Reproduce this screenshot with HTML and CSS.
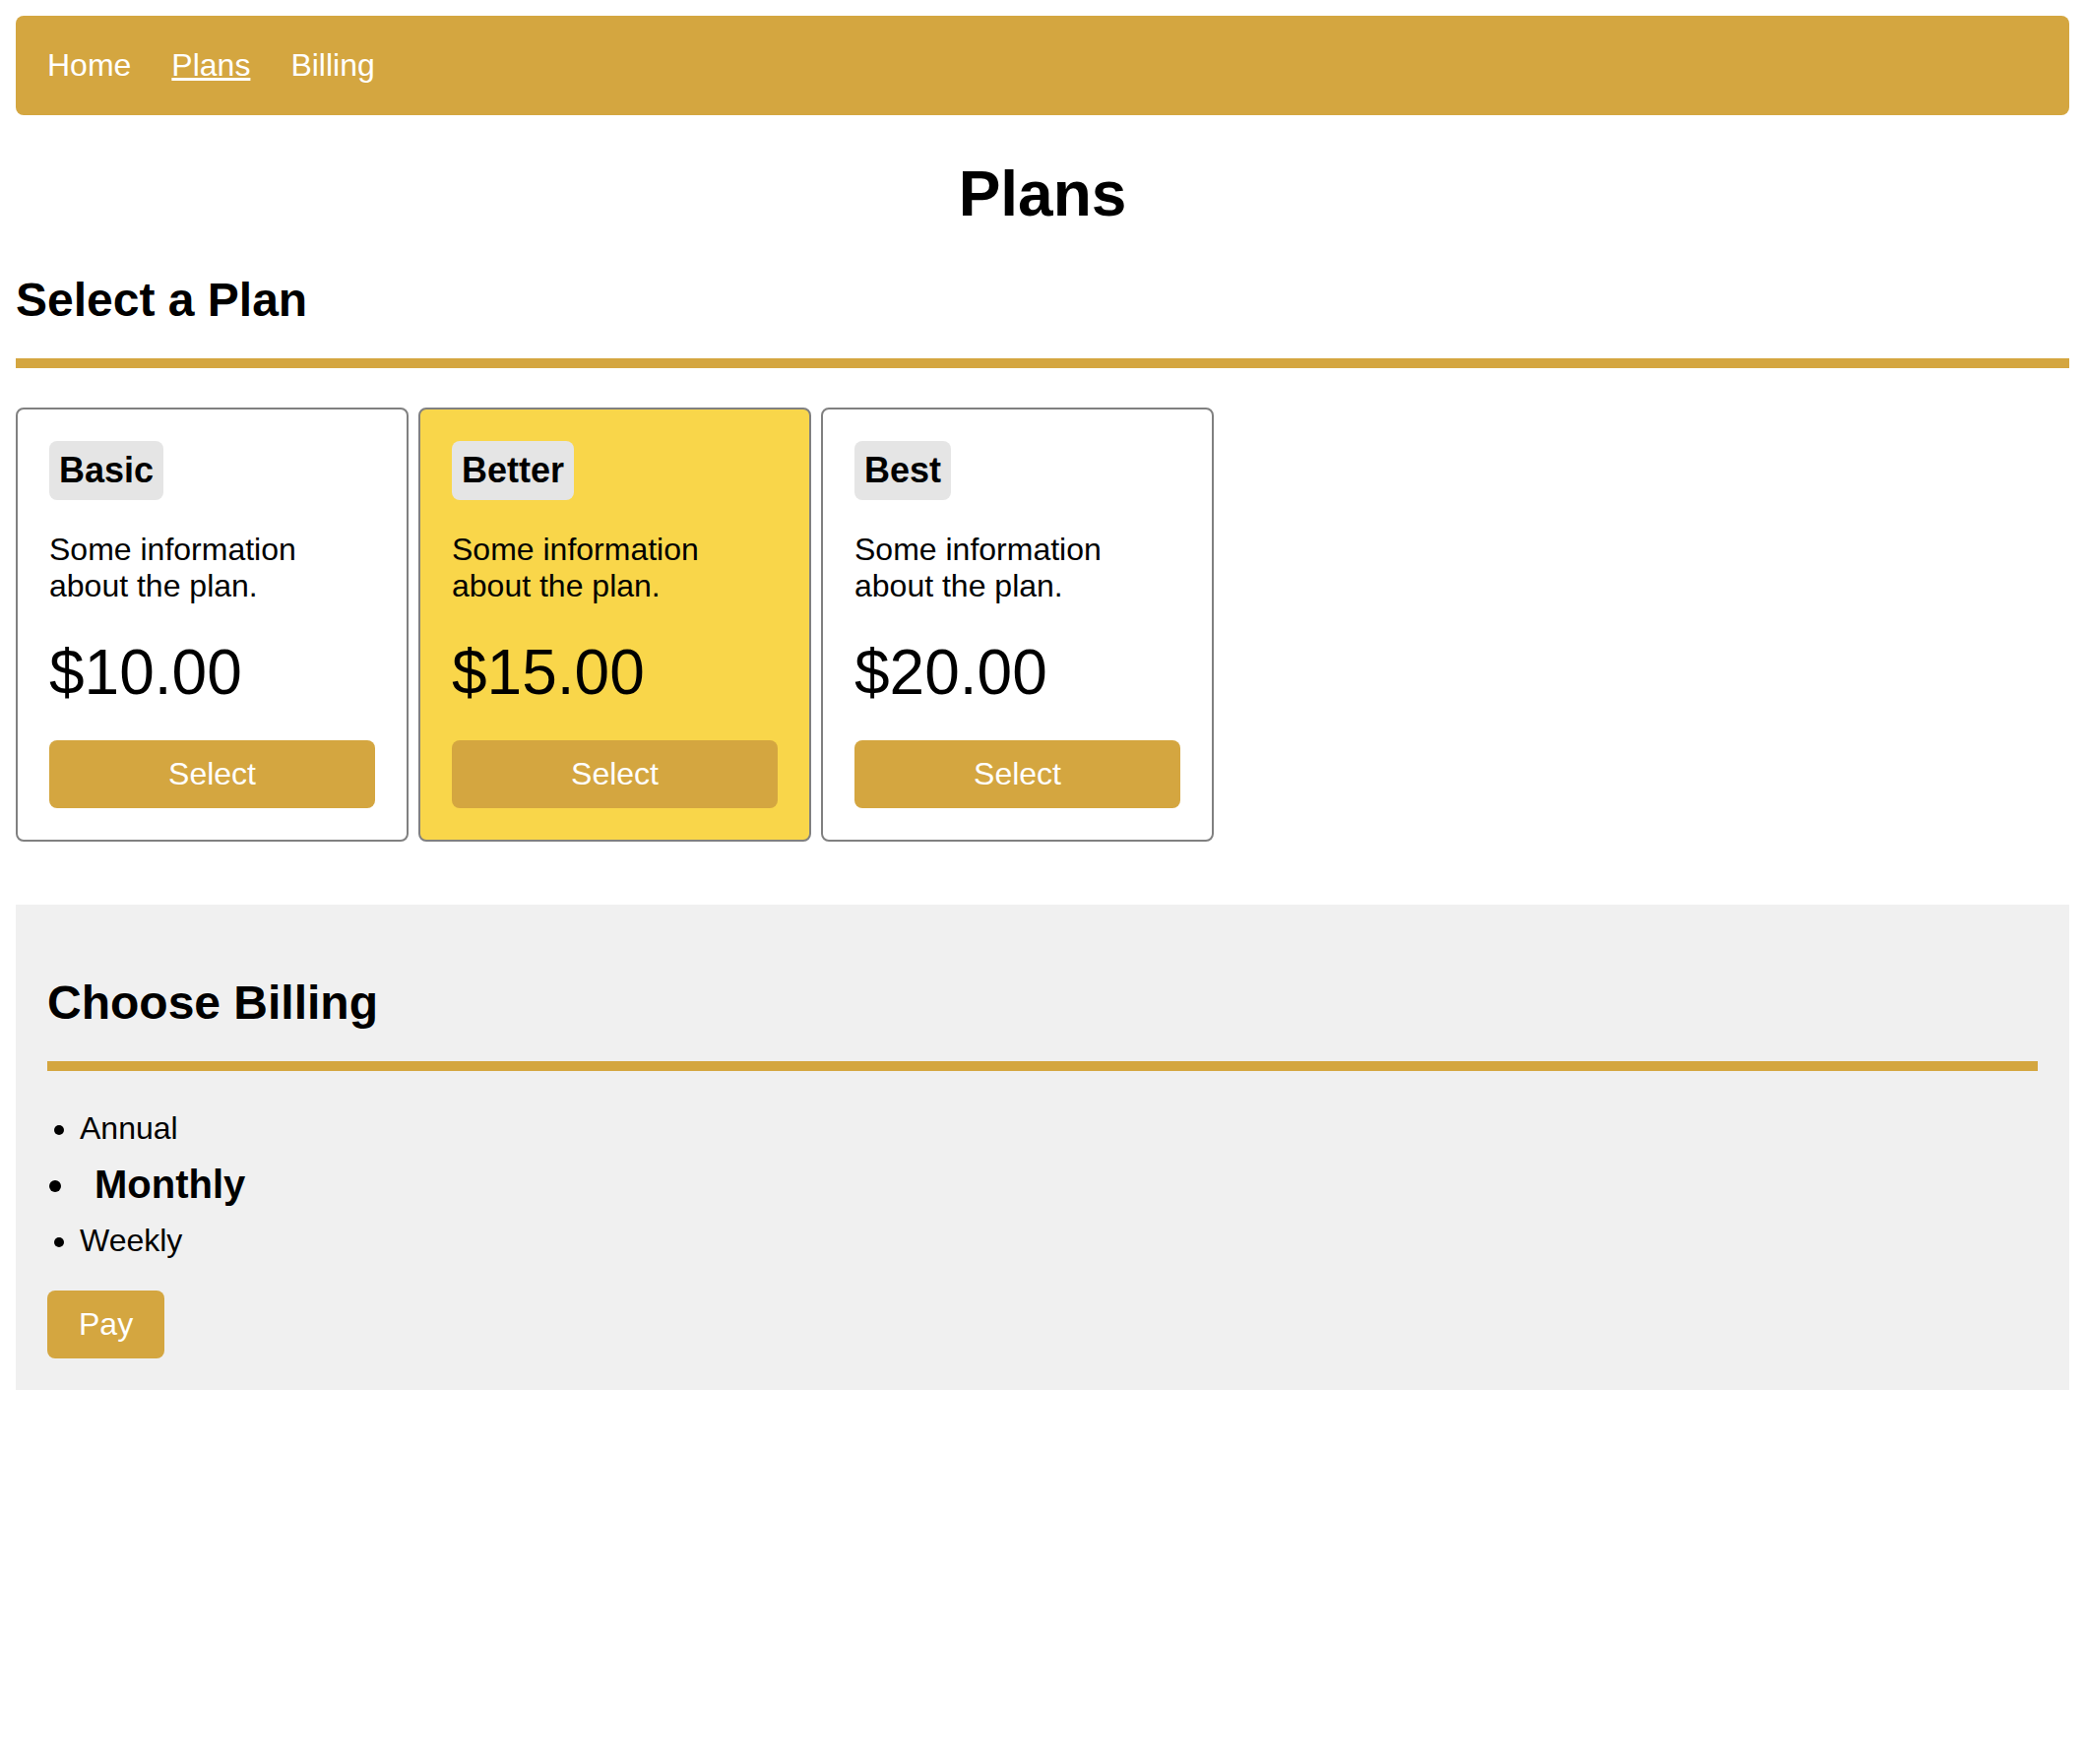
FILE: index.html
```html
<!DOCTYPE html>
<html lang="en">
<head>
<meta charset="utf-8">
<title>Plans</title>
<link rel="stylesheet" href="styles.css">
</head>
<body>
<nav class="nav">
  <a class="nav-link" href="#">Home</a>
  <a class="nav-link active" href="#">Plans</a>
  <a class="nav-link" href="#">Billing</a>
</nav>
<h1 class="title">Plans</h1>
<h2 class="section-title">Select a Plan</h2>
<div class="plans">
  <div class="card">
    <h3 class="badge">Basic</h3>
    <p class="desc">Some information about the plan.</p>
    <div class="price">$10.00</div>
    <button class="select-btn">Select</button>
  </div>
  <div class="card card-featured">
    <h3 class="badge">Better</h3>
    <p class="desc">Some information about the plan.</p>
    <div class="price">$15.00</div>
    <button class="select-btn">Select</button>
  </div>
  <div class="card">
    <h3 class="badge">Best</h3>
    <p class="desc">Some information about the plan.</p>
    <div class="price">$20.00</div>
    <button class="select-btn">Select</button>
  </div>
</div>
<section class="billing">
  <h2 class="section-title">Choose Billing</h2>
  <ul class="options">
    <li class="option">Annual</li>
    <li class="option option-selected">Monthly</li>
    <li class="option">Weekly</li>
  </ul>
  <button class="pay-btn">Pay</button>
</section>
</body>
</html>
```
FILE: styles.css
```css
body {
  margin: 16px;
  font-family: "Liberation Sans", Arial, Helvetica, sans-serif;
  font-size: 32px;
  color: #000;
  background: #fff;
}

.nav {
  display: flex;
  gap: 41px;
  background: #d4a640;
  border-radius: 8px;
  padding: 32px;
}

.nav-link {
  color: #fff;
  text-decoration: none;
}

.nav-link.active {
  text-decoration: underline;
}

.title {
  font-size: 64px;
  font-weight: bold;
  text-align: center;
  margin: 43px 0;
}

.section-title {
  font-size: 48px;
  font-weight: bold;
  margin: 40px 0;
  padding-bottom: 32px;
  border-bottom: 10px solid #d4a640;
}

.plans {
  display: flex;
  gap: 10px;
  margin-bottom: 64px;
}

.card {
  box-sizing: border-box;
  width: 399px;
  border: 2px solid #808080;
  border-radius: 8px;
  padding: 32px;
  background: #fff;
}

.card-featured {
  background: #f9d64a;
}

.badge {
  width: fit-content;
  margin: 0;
  padding: 10px;
  background: #e5e5e5;
  border-radius: 8px;
  font-size: 36px;
  line-height: 40px;
  font-weight: bold;
}

.desc {
  margin: 32px 0;
}

.price {
  font-size: 64px;
  margin: 32px 0;
}

.select-btn {
  display: block;
  width: 100%;
  padding: 16px;
  border: none;
  border-radius: 8px;
  background: #d4a640;
  color: #fff;
  font: inherit;
  font-size: 32px;
}

.billing {
  background: #f0f0f0;
  padding: 32px;
}

.options {
  margin: 32px 0;
  padding-left: 33px;
}

.option {
  font-size: 32px;
}

.option-selected {
  font-size: 40px;
  font-weight: bold;
  margin: 16px 0;
  padding-left: 15px;
}

.pay-btn {
  display: inline-block;
  padding: 16px 32px;
  border: none;
  border-radius: 8px;
  background: #d4a640;
  color: #fff;
  font: inherit;
  font-size: 32px;
}
```
